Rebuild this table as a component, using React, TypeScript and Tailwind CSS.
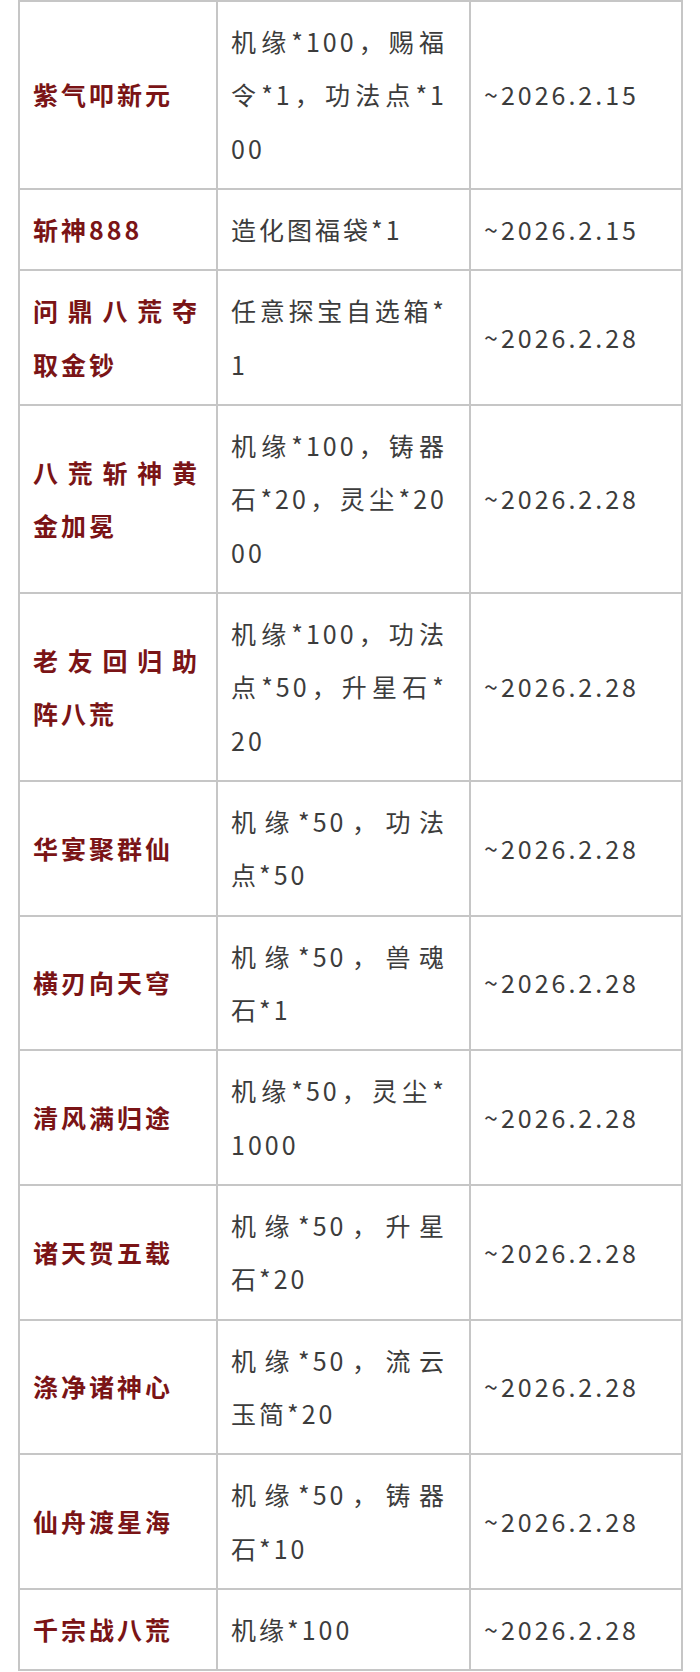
const rows = [
  { name: '紫气叩新元', reward: '机缘*100，赐福令*1，功法点*100', date: '~2026.2.15' },
  { name: '斩神888', reward: '造化图福袋*1', date: '~2026.2.15' },
  { name: '问鼎八荒夺取金钞', reward: '任意探宝自选箱*1', date: '~2026.2.28' },
  { name: '八荒斩神黄金加冕', reward: '机缘*100，铸器石*20，灵尘*2000', date: '~2026.2.28' },
  { name: '老友回归助阵八荒', reward: '机缘*100，功法点*50，升星石*20', date: '~2026.2.28' },
  { name: '华宴聚群仙', reward: '机缘*50，功法点*50', date: '~2026.2.28' },
  { name: '横刃向天穹', reward: '机缘*50，兽魂石*1', date: '~2026.2.28' },
  { name: '清风满归途', reward: '机缘*50，灵尘*1000', date: '~2026.2.28' },
  { name: '诸天贺五载', reward: '机缘*50，升星石*20', date: '~2026.2.28' },
  { name: '涤净诸神心', reward: '机缘*50，流云玉简*20', date: '~2026.2.28' },
  { name: '仙舟渡星海', reward: '机缘*50，铸器石*10', date: '~2026.2.28' },
  { name: '千宗战八荒', reward: '机缘*100', date: '~2026.2.28' },
];

export default function App() {
  return (
    <div className="min-h-[1672px] bg-white pl-[18px] font-['Noto_Sans_CJK_SC','Noto_Sans',sans-serif] text-[25px] leading-[53.33px] tracking-[3px]">
      <table className="w-[663px] table-fixed border-collapse">
        <colgroup>
          <col className="w-[198px]" />
          <col className="w-[253px]" />
          <col className="w-[212px]" />
        </colgroup>
        <tbody>
          {rows.map((row) => (
            <tr key={row.name}>
              <td className="border-2 border-[#c6c6c6] py-[13px] pl-[13px] pr-[16px] text-justify align-middle font-bold text-[#7a1416] break-all">
                {row.name}
              </td>
              <td className="border-2 border-[#c6c6c6] py-[13px] pl-[13px] pr-[22px] text-justify align-middle text-[#3c3c3c] break-all">
                {row.reward}
              </td>
              <td className="border-2 border-[#c6c6c6] px-[13px] py-[13px] align-middle text-[#3c3c3c]">
                {row.date}
              </td>
            </tr>
          ))}
        </tbody>
      </table>
    </div>
  );
}
